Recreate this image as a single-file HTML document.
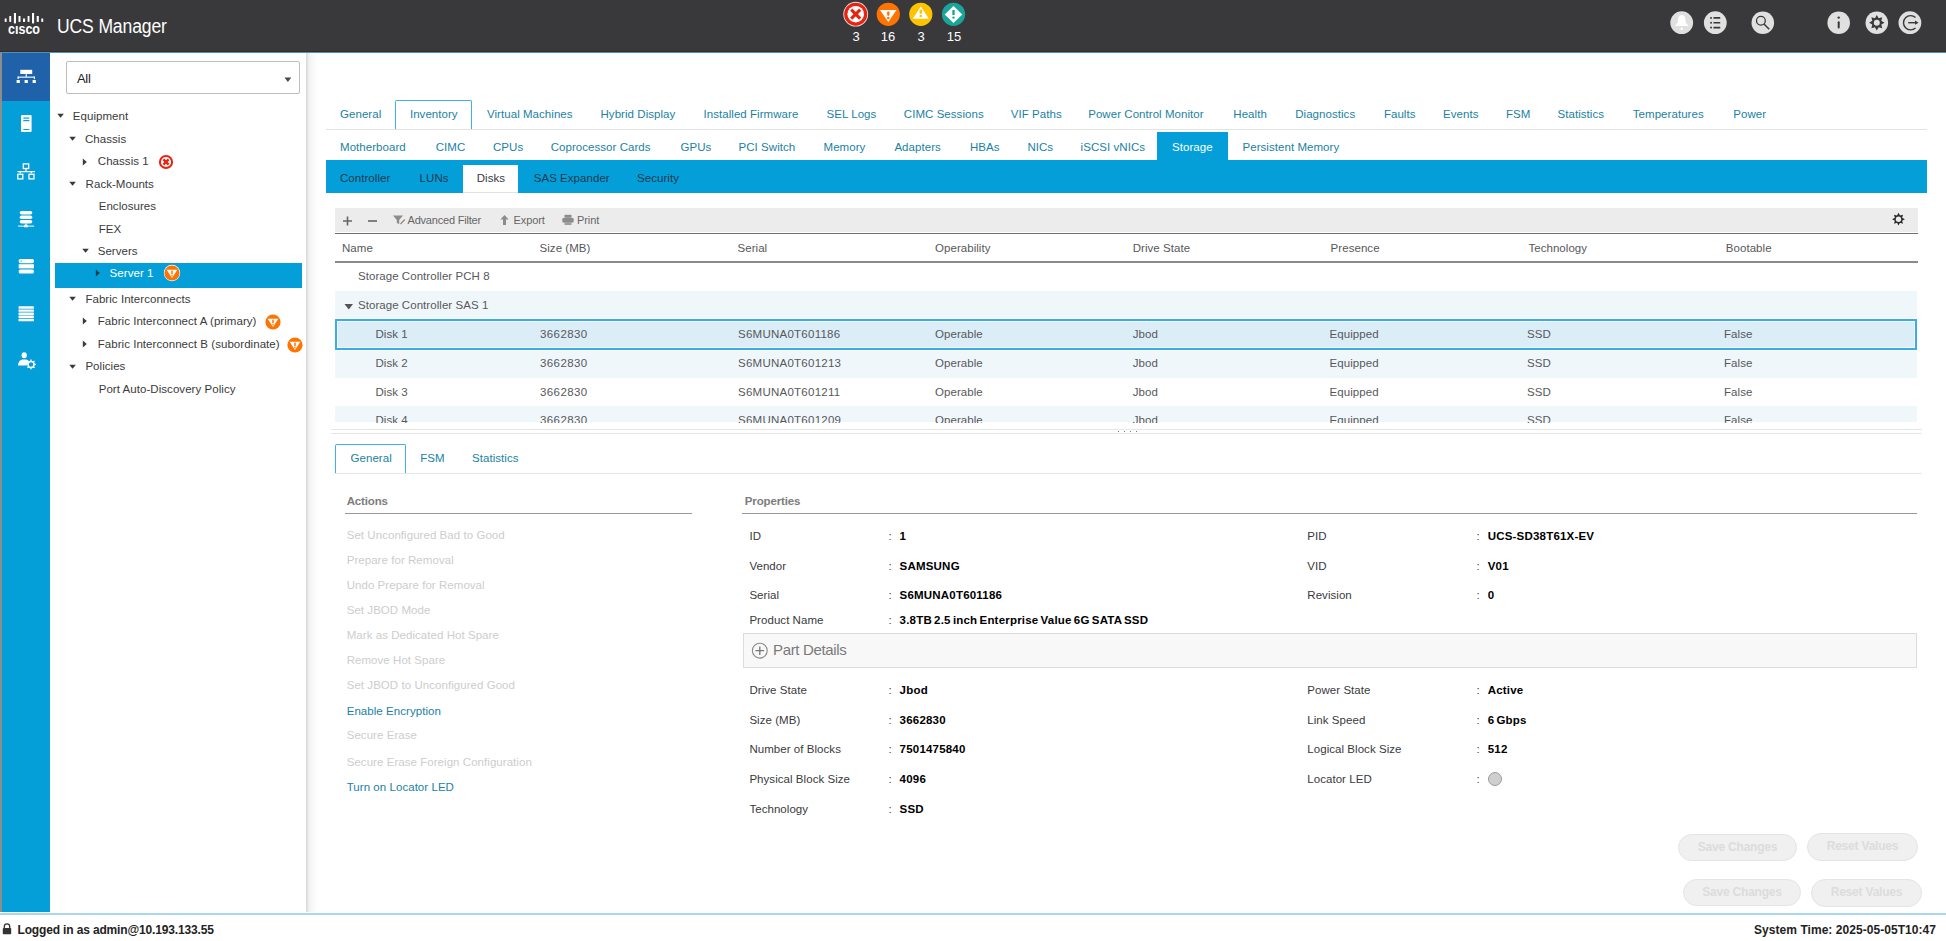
<!DOCTYPE html>
<html><head><meta charset="utf-8">
<style>
*{box-sizing:border-box;margin:0;padding:0}
html,body{width:1946px;height:941px;overflow:hidden;background:#fff;font-family:"Liberation Sans",sans-serif;}
.a{position:absolute}
.t{position:absolute;white-space:nowrap;line-height:16px;height:16px;font-size:11.5px;letter-spacing:0.05px}
#hdr{left:0;top:0;width:1946px;height:51px;background:#39393b}
.hl1{left:0;top:51px;width:1946px;height:1px;background:#352b2a}
.hl2{left:0;top:52px;width:1946px;height:1px;background:#4f93b5}
#side{left:2px;top:53px;width:48px;height:859px;background:#049fd9}
#sedge{left:0;top:53px;width:2px;height:859px;background:#8d8d8d}
#sact{left:2px;top:53px;width:48px;height:48px;background:#1f62a9}
.tree{color:#3a3a3c}
.tab1{color:#1a82a3}
.blk{color:#000;font-weight:bold}
</style></head>
<body>
<!-- HEADER -->
<div id="hdr" class="a"></div>
<div class="a hl1"></div><div class="a hl2"></div>
<svg class="a" style="left:0;top:0" width="50" height="40" viewBox="0 0 50 40">
 <g fill="#fff">
  <rect x="4.7" y="18.5" width="1.9" height="3.4"/>
  <rect x="9.3" y="16" width="1.9" height="5.9"/>
  <rect x="13.9" y="13" width="2.1" height="10.4"/>
  <rect x="18.5" y="16" width="2" height="5.9"/>
  <rect x="23" y="18.5" width="2.1" height="3.4"/>
  <rect x="27.6" y="16" width="1.9" height="5.9"/>
  <rect x="32" y="13" width="2.1" height="10.4"/>
  <rect x="36.7" y="16" width="2.1" height="5.9"/>
  <rect x="41.3" y="18.5" width="1.9" height="3.4"/>
 </g>
 <text x="8" y="33.9" fill="#fff" font-family="Liberation Sans" font-weight="bold" font-size="14.2" textLength="32" lengthAdjust="spacingAndGlyphs">cısco</text>
</svg>
<div class="t" style="left:57px;top:15px;font-size:19.5px;line-height:22px;height:22px;color:#fff;letter-spacing:-0.15px;transform:scaleX(0.9);transform-origin:0 0">UCS Manager</div>


<!-- alarms -->
<svg class="a" style="left:840px;top:0" width="130" height="48" viewBox="840 0 130 48">
 <circle cx="855.7" cy="14.2" r="12.4" fill="#fff" opacity="0.85"/>
 <circle cx="855.7" cy="14.2" r="11.5" fill="#e8230f"/>
 <circle cx="855.7" cy="14.2" r="8.3" fill="#fff"/>
 <path d="M851.2 9.7 L860.2 18.7 M860.2 9.7 L851.2 18.7" stroke="#e8230f" stroke-width="3.1" stroke-linecap="butt"/>
 <circle cx="888.3" cy="14.3" r="11.6" fill="#ff7300"/>
 <path d="M880 10.1 L896.5 10.1 L888.3 22 Z" fill="#fff"/>
 <rect x="887.2" y="11.6" width="2.3" height="4.1" rx="0.6" fill="#ff7300"/>
 <circle cx="888.3" cy="18" r="1.3" fill="#ff7300"/>
 <circle cx="920.8" cy="14.3" r="11.6" fill="#ffc300"/>
 <path d="M920.8 6.4 L928.9 18.8 L912.7 18.8 Z" fill="#fff"/>
 <rect x="919.6" y="9.6" width="2.4" height="4.2" rx="0.6" fill="#ffc300"/>
 <circle cx="920.8" cy="16" r="1.3" fill="#ffc300"/>
 <circle cx="953.5" cy="14.3" r="11.6" fill="#17a699"/>
 <path d="M953.5 6 L962.3 14.5 L953.5 23 L944.7 14.5 Z" fill="#fff"/>
 <rect x="952.3" y="10" width="2.4" height="5.1" rx="0.6" fill="#17a699"/>
 <circle cx="953.5" cy="17.6" r="1.2" fill="#17a699"/>
</svg>
<div class="t" style="left:841px;top:29px;width:30px;text-align:center;font-size:13px;color:#fff;letter-spacing:0">3</div>
<div class="t" style="left:873px;top:29px;width:30px;text-align:center;font-size:13px;color:#fff;letter-spacing:0">16</div>
<div class="t" style="left:906px;top:29px;width:30px;text-align:center;font-size:13px;color:#fff;letter-spacing:0">3</div>
<div class="t" style="left:939px;top:29px;width:30px;text-align:center;font-size:13px;color:#fff;letter-spacing:0">15</div>
<!-- right icons -->
<svg class="a" style="left:1660px;top:0" width="280" height="48" viewBox="1660 0 280 48">
 <g fill="#e0e0e0">
  <circle cx="1681.7" cy="22.7" r="11.4"/>
  <circle cx="1715.3" cy="22.7" r="11.4"/>
  <circle cx="1762.8" cy="22.7" r="11.3"/>
  <circle cx="1838.7" cy="22.7" r="11.3"/>
  <circle cx="1876.8" cy="22.7" r="11.3"/>
  <circle cx="1909.9" cy="22.7" r="11.4"/>
 </g>
 <path d="M1674.9 25.9 L1677.6 22.5 L1678.2 18.2 Q1678.8 15.1 1681.7 15.1 Q1684.6 15.1 1685.2 18.2 L1685.8 22.5 L1688.6 25.9 Z" fill="#fff"/>
 <circle cx="1681.7" cy="28.8" r="1.2" fill="#fff"/>
 <g fill="#39393b">
  <rect x="1710.2" y="17.1" width="1.7" height="1.7"/><rect x="1713.4" y="17.1" width="6.9" height="1.7" rx="0.5"/>
  <rect x="1710.2" y="21.9" width="1.7" height="1.7"/><rect x="1713.4" y="21.9" width="6.9" height="1.7" rx="0.5"/>
  <rect x="1710.2" y="26.7" width="1.7" height="1.7"/><rect x="1713.4" y="26.7" width="6.9" height="1.7" rx="0.5"/>
 </g>
 <circle cx="1760.9" cy="20.8" r="4.4" fill="none" stroke="#39393b" stroke-width="1.3"/>
 <path d="M1764 24 L1769.2 29.2" stroke="#39393b" stroke-width="1.5"/>
 <circle cx="1838.7" cy="17.6" r="1.2" fill="#39393b"/>
 <rect x="1837.7" y="21.3" width="2" height="7.3" rx="1" fill="#39393b"/>
 <path d="M1876.80 15.00 L1878.68 18.17 L1882.24 17.26 L1881.33 20.82 L1884.50 22.70 L1881.33 24.58 L1882.24 28.14 L1878.68 27.23 L1876.80 30.40 L1874.92 27.23 L1871.36 28.14 L1872.27 24.58 L1869.10 22.70 L1872.27 20.82 L1871.36 17.26 L1874.92 18.17 Z" fill="#39393b"/>
 <circle cx="1876.8" cy="22.7" r="3" fill="#e0e0e0"/>
 <path d="M1915.5 17.6 A7.1 7.1 0 1 0 1915.5 27.9" fill="none" stroke="#39393b" stroke-width="1.4"/>
 <path d="M1908.2 22.7 L1915.8 22.7" stroke="#39393b" stroke-width="1.4"/>
 <path d="M1915 20.6 L1918.6 22.7 L1915 24.8 Z" fill="#39393b"/>
</svg>

<!-- SIDEBAR -->
<div id="sedge" class="a"></div>
<div id="side" class="a"></div>
<div id="sact" class="a"></div>

<svg class="a" style="left:0;top:53px" width="50" height="330" viewBox="0 53 50 330">
 <!-- icon0 hierarchy (active) -->
 <g fill="#fff">
  <rect x="20.3" y="69.8" width="11.9" height="4.2"/>
  <rect x="25.7" y="74" width="1.1" height="3"/>
  <rect x="17.6" y="76.6" width="17.3" height="1.1"/>
  <rect x="17.6" y="76.6" width="1.1" height="2.5"/><rect x="33.8" y="76.6" width="1.1" height="2.5"/>
  <rect x="16.6" y="80" width="3.2" height="3"/><rect x="24.6" y="80" width="3.2" height="3"/><rect x="32.6" y="80" width="3.2" height="3"/>
 </g>
 <!-- icon1 server -->
 <rect x="21" y="115" width="10.6" height="17" rx="1" fill="#fff"/>
 <rect x="23.3" y="117.5" width="6" height="1.2" fill="#049fd9"/>
 <rect x="23.3" y="120" width="6" height="1.2" fill="#049fd9"/>
 <rect x="23.3" y="129" width="6" height="1" fill="#049fd9"/>
 <!-- icon2 network -->
 <g fill="none" stroke="#fff" stroke-width="1.3">
  <rect x="23.3" y="163.9" width="5.4" height="4.6"/>
  <path d="M26 168.5 V171 M17.5 171.6 H35 M20.3 171.6 V173.5 M31.3 171.6 V173.5"/>
  <rect x="17.8" y="174.3" width="5" height="4.6"/>
  <rect x="29" y="174.3" width="5" height="4.6"/>
 </g>
 <!-- icon3 db server -->
 <g fill="#fff">
  <rect x="19.7" y="211" width="12.6" height="3.6" rx="1.8"/>
  <rect x="19.7" y="215.5" width="12.6" height="3.6" rx="1.8"/>
  <rect x="19.7" y="220" width="12.6" height="3.6" rx="1.8"/>
  <rect x="25.4" y="223.5" width="1.2" height="2.5"/>
  <rect x="18" y="225.6" width="16.2" height="1"/>
  <rect x="24.2" y="224.8" width="3.6" height="2.5"/>
 </g>
 <!-- icon4 storage -->
 <g fill="#fff">
  <rect x="18.7" y="259" width="15.2" height="4.2" rx="1.6"/>
  <rect x="18.7" y="264.2" width="15.2" height="4.2"/>
  <rect x="18.7" y="269.4" width="15.2" height="4.2" rx="1.6"/>
 </g>
 <rect x="20.5" y="260.5" width="1.2" height="1" fill="#049fd9"/>
 <!-- icon5 rack list -->
 <g fill="#fff">
  <rect x="18.5" y="306.3" width="15.4" height="2.4" rx="0.4"/>
  <rect x="18.5" y="309.4" width="15.4" height="2.4" rx="0.4"/>
  <rect x="18.5" y="312.5" width="15.4" height="2.4" rx="0.4"/>
  <rect x="18.5" y="315.6" width="15.4" height="2.4" rx="0.4"/>
  <rect x="18.5" y="318.7" width="15.4" height="2.6" rx="0.4"/>
 </g>
 <!-- icon6 user gear -->
 <g fill="#fff">
  <ellipse cx="24.2" cy="355.2" rx="2.6" ry="3"/>
  <path d="M18 365.6 Q18.3 360.6 22.2 359.6 L26.2 359.6 Q28.2 360.3 28.8 361.5 L26.5 365.6 Z"/>
 </g>
 <g transform="translate(31 364.4)">
  <circle r="3" fill="none" stroke="#fff" stroke-width="1.5"/>
  <g stroke="#fff" stroke-width="1.3">
   <path d="M0 -4.9 V-3.3 M0 3.3 V4.9 M-4.9 0 H-3.3 M3.3 0 H4.9 M-3.5 -3.5 L-2.3 -2.3 M2.3 2.3 L3.5 3.5 M3.5 -3.5 L2.3 -2.3 M-2.3 2.3 L-3.5 3.5"/>
  </g>
 </g>
</svg>

<!-- TREE PANEL -->
<div class="a" style="left:50px;top:53px;width:256px;height:859px;background:#fff"></div>
<div class="a" style="left:306px;top:53px;width:12px;height:859px;background:linear-gradient(to right,#d9d9d9,#f4f4f4 30%,#fff)"></div>
<div class="a" style="left:66px;top:61px;width:234px;height:33px;border:1px solid #bdbdbd;border-radius:2px;background:#fff"></div>
<div class="t" style="left:77px;top:71px;font-size:13px;color:#222;letter-spacing:-0.3px">All</div>
<svg class="a" style="left:283px;top:76px" width="10" height="7"><path d="M1.5 1.5 L8.3 1.5 L4.9 6 Z" fill="#4a4a4a"/></svg>
<svg class="a" style="left:57px;top:113px" width="8" height="6"><path d="M0.3 0.8 L6.8 0.8 L3.55 4.8 Z" fill="#3a3a3c"/></svg>
<div class="t tree" style="left:72.8px;top:108.0px">Equipment</div>
<svg class="a" style="left:69px;top:136px" width="8" height="6"><path d="M0.3 0.8 L6.8 0.8 L3.55 4.8 Z" fill="#3a3a3c"/></svg>
<div class="t tree" style="left:85.0px;top:130.8px">Chassis</div>
<svg class="a" style="left:82px;top:158px" width="6" height="8"><path d="M0.8 0.5 L4.8 4 L0.8 7.5 Z" fill="#3a3a3c"/></svg>
<div class="t tree" style="left:97.8px;top:153.1px">Chassis 1</div>
<svg class="a" style="left:69px;top:181px" width="8" height="6"><path d="M0.3 0.8 L6.8 0.8 L3.55 4.8 Z" fill="#3a3a3c"/></svg>
<div class="t tree" style="left:85.6px;top:176.0px">Rack-Mounts</div>
<div class="t tree" style="left:98.7px;top:198.3px">Enclosures</div>
<div class="t tree" style="left:98.7px;top:220.7px">FEX</div>
<svg class="a" style="left:82px;top:248px" width="8" height="6"><path d="M0.3 0.8 L6.8 0.8 L3.55 4.8 Z" fill="#3a3a3c"/></svg>
<div class="t tree" style="left:97.7px;top:242.9px">Servers</div>
<svg class="a" style="left:69px;top:296px" width="8" height="6"><path d="M0.3 0.8 L6.8 0.8 L3.55 4.8 Z" fill="#3a3a3c"/></svg>
<div class="t tree" style="left:85.4px;top:290.5px">Fabric Interconnects</div>
<svg class="a" style="left:82px;top:317px" width="6" height="8"><path d="M0.8 0.5 L4.8 4 L0.8 7.5 Z" fill="#3a3a3c"/></svg>
<div class="t tree" style="left:97.7px;top:312.5px">Fabric Interconnect A (primary)</div>
<svg class="a" style="left:82px;top:340px" width="6" height="8"><path d="M0.8 0.5 L4.8 4 L0.8 7.5 Z" fill="#3a3a3c"/></svg>
<div class="t tree" style="left:97.7px;top:335.5px">Fabric Interconnect B (subordinate)</div>
<svg class="a" style="left:69px;top:364px" width="8" height="6"><path d="M0.3 0.8 L6.8 0.8 L3.55 4.8 Z" fill="#3a3a3c"/></svg>
<div class="t tree" style="left:85.4px;top:358.4px">Policies</div>
<div class="t tree" style="left:98.7px;top:381.1px">Port Auto-Discovery Policy</div>
<div class="a" style="left:55px;top:263px;width:247px;height:25px;background:#049fd9"></div>
<svg class="a" style="left:94.6px;top:269px" width="6" height="8"><path d="M0.8 0.5 L4.8 4 L0.8 7.5 Z" fill="#2a3a48"/></svg>
<div class="t" style="left:109.6px;top:265.2px;color:#fff">Server 1</div>
<svg class="a" style="left:162.6px;top:264.1px" width="18" height="18" viewBox="0 0 18 18"><circle cx="9" cy="9" r="8.2" fill="#fff"/><circle cx="9" cy="9" r="7.6" fill="#ff7300"/><path d="M3.6 5.8 L14.4 5.8 L9 14 Z" fill="#fff"/><rect x="8.25" y="6.6" width="1.5" height="3.6" fill="#ff7300"/><circle cx="9" cy="11.7" r="0.8" fill="#ff7300"/></svg>
<svg class="a" style="left:263.7px;top:312.7px" width="18" height="18" viewBox="0 0 18 18"><circle cx="9" cy="9" r="7.6" fill="#ff7300"/><path d="M3.6 5.8 L14.4 5.8 L9 14 Z" fill="#fff"/><rect x="8.25" y="6.6" width="1.5" height="3.6" fill="#ff7300"/><circle cx="9" cy="11.7" r="0.8" fill="#ff7300"/></svg>
<svg class="a" style="left:286.0px;top:335.5px" width="18" height="18" viewBox="0 0 18 18"><circle cx="9" cy="9" r="7.6" fill="#ff7300"/><path d="M3.6 5.8 L14.4 5.8 L9 14 Z" fill="#fff"/><rect x="8.25" y="6.6" width="1.5" height="3.6" fill="#ff7300"/><circle cx="9" cy="11.7" r="0.8" fill="#ff7300"/></svg>
<svg class="a" style="left:156.6px;top:152.7px" width="18" height="18" viewBox="0 0 18 18"><circle cx="9" cy="9" r="6.1" fill="none" stroke="#e8230f" stroke-width="2"/><path d="M6.4 6.4 L11.6 11.6 M11.6 6.4 L6.4 11.6" stroke="#e8230f" stroke-width="2.4"/></svg>


<!-- MAIN TABS -->
<div class="a" style="left:395px;top:100px;width:77px;height:29px;border:1.5px solid #3fb0e3;border-bottom:none;border-radius:2px 2px 0 0;background:#fff"></div>
<div class="a" style="left:326px;top:129px;width:1601px;height:1.2px;background:#e3e3e3"></div>
<div class="t tab1" style="left:340.0px;top:105.5px">General</div>
<div class="t tab1" style="left:409.9px;top:105.5px">Inventory</div>
<div class="t tab1" style="left:487.0px;top:105.5px">Virtual Machines</div>
<div class="t tab1" style="left:600.5px;top:105.5px">Hybrid Display</div>
<div class="t tab1" style="left:703.5px;top:105.5px">Installed Firmware</div>
<div class="t tab1" style="left:826.5px;top:105.5px">SEL Logs</div>
<div class="t tab1" style="left:903.8px;top:105.5px">CIMC Sessions</div>
<div class="t tab1" style="left:1010.8px;top:105.5px">VIF Paths</div>
<div class="t tab1" style="left:1088.2px;top:105.5px">Power Control Monitor</div>
<div class="t tab1" style="left:1233.3px;top:105.5px">Health</div>
<div class="t tab1" style="left:1295.2px;top:105.5px">Diagnostics</div>
<div class="t tab1" style="left:1383.9px;top:105.5px">Faults</div>
<div class="t tab1" style="left:1443.0px;top:105.5px">Events</div>
<div class="t tab1" style="left:1505.9px;top:105.5px">FSM</div>
<div class="t tab1" style="left:1557.5px;top:105.5px">Statistics</div>
<div class="t tab1" style="left:1632.8px;top:105.5px">Temperatures</div>
<div class="t tab1" style="left:1733.3px;top:105.5px">Power</div>
<div class="a" style="left:1157px;top:132px;width:71px;height:29px;background:#049fd9"></div>
<div class="t" style="left:340.0px;top:138.5px;color:#1a82a3">Motherboard</div>
<div class="t" style="left:435.7px;top:138.5px;color:#1a82a3">CIMC</div>
<div class="t" style="left:493.0px;top:138.5px;color:#1a82a3">CPUs</div>
<div class="t" style="left:550.7px;top:138.5px;color:#1a82a3">Coprocessor Cards</div>
<div class="t" style="left:680.5px;top:138.5px;color:#1a82a3">GPUs</div>
<div class="t" style="left:738.5px;top:138.5px;color:#1a82a3">PCI Switch</div>
<div class="t" style="left:823.5px;top:138.5px;color:#1a82a3">Memory</div>
<div class="t" style="left:894.4px;top:138.5px;color:#1a82a3">Adapters</div>
<div class="t" style="left:970.0px;top:138.5px;color:#1a82a3">HBAs</div>
<div class="t" style="left:1027.4px;top:138.5px;color:#1a82a3">NICs</div>
<div class="t" style="left:1080.6px;top:138.5px;color:#1a82a3">iSCSI vNICs</div>
<div class="t" style="left:1172.0px;top:138.5px;color:#fff">Storage</div>
<div class="t" style="left:1242.5px;top:138.5px;color:#1a82a3">Persistent Memory</div>
<div class="a" style="left:326px;top:160px;width:1601px;height:33px;background:#049fd9"></div>
<div class="a" style="left:463px;top:165px;width:55px;height:28px;background:#fff"></div><div class="a" style="left:463px;top:192.3px;width:55px;height:1px;background:#e2e2e2"></div>
<div class="t" style="left:340.0px;top:169.5px;color:#1b3a50">Controller</div>
<div class="t" style="left:419.6px;top:169.5px;color:#1b3a50">LUNs</div>
<div class="t" style="left:476.7px;top:169.5px;color:#3a3a3c">Disks</div>
<div class="t" style="left:533.7px;top:169.5px;color:#1b3a50">SAS Expander</div>
<div class="t" style="left:637.0px;top:169.5px;color:#1b3a50">Security</div>
<div class="a" style="left:335px;top:207.6px;width:1583px;height:24.4px;background:#ececec"></div><div class="a" style="left:335px;top:233px;width:1583px;height:1px;background:#707070"></div>
<svg class="a" style="left:340px;top:212px" width="270" height="16" viewBox="340 212 270 16">
 <path d="M343 221 H352 M347.5 216.5 V225.5" stroke="#666" stroke-width="1.6"/>
 <path d="M368 221 H377" stroke="#666" stroke-width="1.6"/>
 <path d="M393 215.5 H403 L399.2 220 V224 L396.8 223 V220 Z" fill="#8c8c8c"/>
 <path d="M400.5 224 L404.8 219.5" stroke="#8c8c8c" stroke-width="1.3"/>
 <path d="M504.5 215 L508.6 219.6 H506 V225 H503 V219.6 H500.4 Z" fill="#8c8c8c"/>
 <rect x="564.5" y="214.8" width="7" height="3" fill="#8c8c8c"/>
 <rect x="562.3" y="218" width="11.4" height="4.6" rx="1" fill="#8c8c8c"/>
 <rect x="564.5" y="222" width="7" height="3" fill="#a0a0a0"/>
</svg>
<div class="t" style="left:407.5px;top:212px;font-size:11px;color:#666;letter-spacing:-0.2px">Advanced Filter</div>
<div class="t" style="left:513.5px;top:212px;font-size:11px;color:#666;letter-spacing:-0.1px">Export</div>
<div class="t" style="left:577px;top:212px;font-size:11px;color:#666;letter-spacing:-0.1px">Print</div>
<svg class="a" style="left:1888px;top:209px" width="22" height="22" viewBox="1888 209 22 22"><path d="M1898.50 212.80 L1899.99 215.60 L1903.03 214.67 L1902.10 217.71 L1904.90 219.20 L1902.10 220.69 L1903.03 223.73 L1899.99 222.80 L1898.50 225.60 L1897.01 222.80 L1893.97 223.73 L1894.90 220.69 L1892.10 219.20 L1894.90 217.71 L1893.97 214.67 L1897.01 215.60 Z" fill="#2a2a2c"/><circle cx="1898.5" cy="219.2" r="2.7" fill="#ececec"/></svg>
<div class="a" style="left:335px;top:261px;width:1583px;height:2px;background:#8a8a8a"></div>
<div class="t" style="left:342px;top:239.5px;color:#58585b">Name</div>
<div class="t" style="left:539.5px;top:239.5px;color:#58585b">Size (MB)</div>
<div class="t" style="left:737.5px;top:239.5px;color:#58585b">Serial</div>
<div class="t" style="left:935px;top:239.5px;color:#58585b">Operability</div>
<div class="t" style="left:1132.7px;top:239.5px;color:#58585b">Drive State</div>
<div class="t" style="left:1330.6px;top:239.5px;color:#58585b">Presence</div>
<div class="t" style="left:1528.4px;top:239.5px;color:#58585b">Technology</div>
<div class="t" style="left:1725.8px;top:239.5px;color:#58585b">Bootable</div>
<div class="a" style="left:335px;top:291px;width:1582px;height:26.5px;background:#f0f7fb"></div>
<div class="a" style="left:335px;top:319.3px;width:1582px;height:30.4px;background:#dbedf7;border:2px solid #3aaee2;box-shadow:inset 0 0 0 1px rgba(255,255,255,0.75)"></div>
<div class="a" style="left:335px;top:351.4px;width:1582px;height:26.3px;background:#f0f7fb"></div>
<div class="a" style="left:335px;top:406.2px;width:1582px;height:16.2px;background:#f0f7fb"></div>
<div class="t" style="left:358px;top:267.5px;color:#58585b">Storage Controller PCH 8</div>
<svg class="a" style="left:344px;top:302.5px" width="10" height="8"><path d="M0.5 1 L9 1 L4.75 6.5 Z" fill="#555"/></svg>
<div class="t" style="left:358px;top:296.5px;color:#58585b">Storage Controller SAS 1</div>
<div class="a" style="left:335px;top:262px;width:1583px;height:161px;overflow:hidden">
<div class="t" style="left:40.5px;top:64.0px;color:#58585b">Disk 1</div>
<div class="t" style="left:205.0px;top:64.0px;color:#58585b;letter-spacing:0.4px">3662830</div>
<div class="t" style="left:403.0px;top:64.0px;color:#58585b;letter-spacing:0.25px">S6MUNA0T601186</div>
<div class="t" style="left:600.0px;top:64.0px;color:#58585b">Operable</div>
<div class="t" style="left:797.7px;top:64.0px;color:#58585b">Jbod</div>
<div class="t" style="left:994.6px;top:64.0px;color:#58585b">Equipped</div>
<div class="t" style="left:1192.0px;top:64.0px;color:#58585b">SSD</div>
<div class="t" style="left:1389.0px;top:64.0px;color:#58585b">False</div>
<div class="t" style="left:40.5px;top:93.0px;color:#58585b">Disk 2</div>
<div class="t" style="left:205.0px;top:93.0px;color:#58585b;letter-spacing:0.4px">3662830</div>
<div class="t" style="left:403.0px;top:93.0px;color:#58585b;letter-spacing:0.25px">S6MUNA0T601213</div>
<div class="t" style="left:600.0px;top:93.0px;color:#58585b">Operable</div>
<div class="t" style="left:797.7px;top:93.0px;color:#58585b">Jbod</div>
<div class="t" style="left:994.6px;top:93.0px;color:#58585b">Equipped</div>
<div class="t" style="left:1192.0px;top:93.0px;color:#58585b">SSD</div>
<div class="t" style="left:1389.0px;top:93.0px;color:#58585b">False</div>
<div class="t" style="left:40.5px;top:121.5px;color:#58585b">Disk 3</div>
<div class="t" style="left:205.0px;top:121.5px;color:#58585b;letter-spacing:0.4px">3662830</div>
<div class="t" style="left:403.0px;top:121.5px;color:#58585b;letter-spacing:0.25px">S6MUNA0T601211</div>
<div class="t" style="left:600.0px;top:121.5px;color:#58585b">Operable</div>
<div class="t" style="left:797.7px;top:121.5px;color:#58585b">Jbod</div>
<div class="t" style="left:994.6px;top:121.5px;color:#58585b">Equipped</div>
<div class="t" style="left:1192.0px;top:121.5px;color:#58585b">SSD</div>
<div class="t" style="left:1389.0px;top:121.5px;color:#58585b">False</div>
<div class="t" style="left:40.5px;top:149.5px;color:#58585b">Disk 4</div>
<div class="t" style="left:205.0px;top:149.5px;color:#58585b;letter-spacing:0.4px">3662830</div>
<div class="t" style="left:403.0px;top:149.5px;color:#58585b;letter-spacing:0.25px">S6MUNA0T601209</div>
<div class="t" style="left:600.0px;top:149.5px;color:#58585b">Operable</div>
<div class="t" style="left:797.7px;top:149.5px;color:#58585b">Jbod</div>
<div class="t" style="left:994.6px;top:149.5px;color:#58585b">Equipped</div>
<div class="t" style="left:1192.0px;top:149.5px;color:#58585b">SSD</div>
<div class="t" style="left:1389.0px;top:149.5px;color:#58585b">False</div>
</div>
<div class="a" style="left:331px;top:428.5px;width:1591px;height:1px;background:#e6e6e6"></div>
<div class="a" style="left:331px;top:433px;width:1591px;height:1px;background:#e6e6e6"></div>
<div class="a" style="left:1117.5px;top:430.5px;width:1.5px;height:1.5px;background:#777"></div>
<div class="a" style="left:1123.5px;top:430.5px;width:1.5px;height:1.5px;background:#777"></div>
<div class="a" style="left:1129.5px;top:430.5px;width:1.5px;height:1.5px;background:#777"></div>
<div class="a" style="left:1135.5px;top:430.5px;width:1.5px;height:1.5px;background:#777"></div>


<!-- LOWER TABS -->
<div class="a" style="left:335px;top:444px;width:71px;height:28.5px;border:1.5px solid #3fb0e3;border-bottom:none;border-radius:2px 2px 0 0;background:#fff"></div>
<div class="a" style="left:335px;top:472.5px;width:1587px;height:1.2px;background:#e6e6e6"></div>
<div class="t tab1" style="left:350.5px;top:450px">General</div>
<div class="t tab1" style="left:420.2px;top:450px">FSM</div>
<div class="t tab1" style="left:472px;top:450px">Statistics</div>
<div class="t" style="left:346.7px;top:492.5px;color:#7d7d7d;font-weight:bold;letter-spacing:-0.15px">Actions</div>
<div class="a" style="left:345px;top:512.5px;width:347px;height:1px;background:#9a9a9a"></div>
<div class="t" style="left:744.8px;top:492.5px;color:#7d7d7d;font-weight:bold;letter-spacing:-0.15px">Properties</div>
<div class="a" style="left:742px;top:512.5px;width:1175px;height:1px;background:#9a9a9a"></div>
<div class="t" style="left:346.7px;top:526.7px;color:#cdcdcd">Set Unconfigured Bad to Good</div>
<div class="t" style="left:346.7px;top:552.0px;color:#cdcdcd">Prepare for Removal</div>
<div class="t" style="left:346.7px;top:577.0px;color:#cdcdcd">Undo Prepare for Removal</div>
<div class="t" style="left:346.7px;top:602.2px;color:#cdcdcd">Set JBOD Mode</div>
<div class="t" style="left:346.7px;top:627.2px;color:#cdcdcd">Mark as Dedicated Hot Spare</div>
<div class="t" style="left:346.7px;top:652.3px;color:#cdcdcd">Remove Hot Spare</div>
<div class="t" style="left:346.7px;top:677.4px;color:#cdcdcd">Set JBOD to Unconfigured Good</div>
<div class="t" style="left:346.7px;top:702.6px;color:#1a82a3">Enable Encryption</div>
<div class="t" style="left:346.7px;top:727.4px;color:#cdcdcd">Secure Erase</div>
<div class="t" style="left:346.7px;top:753.6px;color:#cdcdcd">Secure Erase Foreign Configuration</div>
<div class="t" style="left:346.7px;top:778.7px;color:#1a82a3">Turn on Locator LED</div>
<div class="t" style="left:749.4px;top:528.4px;color:#3a3a3c">ID</div>
<div class="t" style="left:888.5px;top:528.4px;color:#3a3a3c">:</div>
<div class="t blk" style="left:899.6px;letter-spacing:0.2px;word-spacing:-1.2px;top:528.4px">1</div>
<div class="t" style="left:749.4px;top:558.1px;color:#3a3a3c">Vendor</div>
<div class="t" style="left:888.5px;top:558.1px;color:#3a3a3c">:</div>
<div class="t blk" style="left:899.6px;letter-spacing:0.2px;word-spacing:-1.2px;top:558.1px">SAMSUNG</div>
<div class="t" style="left:749.4px;top:587.0px;color:#3a3a3c">Serial</div>
<div class="t" style="left:888.5px;top:587.0px;color:#3a3a3c">:</div>
<div class="t blk" style="left:899.6px;letter-spacing:0.2px;word-spacing:-1.2px;top:587.0px">S6MUNA0T601186</div>
<div class="t" style="left:749.4px;top:612.3px;color:#3a3a3c">Product Name</div>
<div class="t" style="left:888.5px;top:612.3px;color:#3a3a3c">:</div>
<div class="t blk" style="left:899.6px;letter-spacing:0.2px;word-spacing:-1.2px;top:612.3px">3.8TB 2.5 inch Enterprise Value 6G SATA SSD</div>
<div class="t" style="left:749.4px;top:682.0px;color:#3a3a3c">Drive State</div>
<div class="t" style="left:888.5px;top:682.0px;color:#3a3a3c">:</div>
<div class="t blk" style="left:899.6px;letter-spacing:0.2px;word-spacing:-1.2px;top:682.0px">Jbod</div>
<div class="t" style="left:749.4px;top:711.7px;color:#3a3a3c">Size (MB)</div>
<div class="t" style="left:888.5px;top:711.7px;color:#3a3a3c">:</div>
<div class="t blk" style="left:899.6px;letter-spacing:0.2px;word-spacing:-1.2px;top:711.7px">3662830</div>
<div class="t" style="left:749.4px;top:741.4px;color:#3a3a3c">Number of Blocks</div>
<div class="t" style="left:888.5px;top:741.4px;color:#3a3a3c">:</div>
<div class="t blk" style="left:899.6px;letter-spacing:0.2px;word-spacing:-1.2px;top:741.4px">7501475840</div>
<div class="t" style="left:749.4px;top:771.0px;color:#3a3a3c">Physical Block Size</div>
<div class="t" style="left:888.5px;top:771.0px;color:#3a3a3c">:</div>
<div class="t blk" style="left:899.6px;letter-spacing:0.2px;word-spacing:-1.2px;top:771.0px">4096</div>
<div class="t" style="left:749.4px;top:800.8px;color:#3a3a3c">Technology</div>
<div class="t" style="left:888.5px;top:800.8px;color:#3a3a3c">:</div>
<div class="t blk" style="left:899.6px;letter-spacing:0.2px;word-spacing:-1.2px;top:800.8px">SSD</div>
<div class="t" style="left:1307.3px;top:528.4px;color:#3a3a3c">PID</div>
<div class="t" style="left:1476.5px;top:528.4px;color:#3a3a3c">:</div>
<div class="t blk" style="left:1487.7px;letter-spacing:0.2px;word-spacing:-1.2px;top:528.4px">UCS-SD38T61X-EV</div>
<div class="t" style="left:1307.3px;top:558.1px;color:#3a3a3c">VID</div>
<div class="t" style="left:1476.5px;top:558.1px;color:#3a3a3c">:</div>
<div class="t blk" style="left:1487.7px;letter-spacing:0.2px;word-spacing:-1.2px;top:558.1px">V01</div>
<div class="t" style="left:1307.3px;top:587.0px;color:#3a3a3c">Revision</div>
<div class="t" style="left:1476.5px;top:587.0px;color:#3a3a3c">:</div>
<div class="t blk" style="left:1487.7px;letter-spacing:0.2px;word-spacing:-1.2px;top:587.0px">0</div>
<div class="t" style="left:1307.3px;top:682.0px;color:#3a3a3c">Power State</div>
<div class="t" style="left:1476.5px;top:682.0px;color:#3a3a3c">:</div>
<div class="t blk" style="left:1487.7px;letter-spacing:0.2px;word-spacing:-1.2px;top:682.0px">Active</div>
<div class="t" style="left:1307.3px;top:711.7px;color:#3a3a3c">Link Speed</div>
<div class="t" style="left:1476.5px;top:711.7px;color:#3a3a3c">:</div>
<div class="t blk" style="left:1487.7px;letter-spacing:0.2px;word-spacing:-1.2px;top:711.7px">6 Gbps</div>
<div class="t" style="left:1307.3px;top:741.4px;color:#3a3a3c">Logical Block Size</div>
<div class="t" style="left:1476.5px;top:741.4px;color:#3a3a3c">:</div>
<div class="t blk" style="left:1487.7px;letter-spacing:0.2px;word-spacing:-1.2px;top:741.4px">512</div>
<div class="t" style="left:1307.3px;top:771.0px;color:#3a3a3c">Locator LED</div>
<div class="t" style="left:1476.5px;top:771.0px;color:#3a3a3c">:</div>
<div class="a" style="left:1488px;top:771.5px;width:14px;height:14px;border-radius:50%;background:#cfcfcf;border:1px solid #9c9c9c"></div>
<div class="a" style="left:742.5px;top:633px;width:1174.5px;height:35px;background:#f8f8f8;border:1px solid #dcdcdc"></div>
<svg class="a" style="left:750px;top:641px" width="20" height="20" viewBox="0 0 20 20"><circle cx="9.8" cy="9.7" r="7.4" fill="none" stroke="#8a8a8a" stroke-width="1.1"/><path d="M9.8 5.4 V14 M5.5 9.7 H14.1" stroke="#777" stroke-width="1.3"/></svg>
<div class="t" style="left:773px;top:641px;font-size:15px;line-height:18px;height:18px;color:#7a7a7a;letter-spacing:-0.35px">Part Details</div>
<div class="a" style="left:1678px;top:834px;width:119px;height:27px;border-radius:14px;background:#f0f0f0;border:1px solid #e4e4e4;color:#dcdcdc;font-weight:bold;font-size:12px;text-align:center;line-height:25px;letter-spacing:-0.2px">Save Changes</div>
<div class="a" style="left:1807px;top:833px;width:111px;height:28px;border-radius:14px;background:#f0f0f0;border:1px solid #e4e4e4;color:#dcdcdc;font-weight:bold;font-size:12px;text-align:center;line-height:24px;letter-spacing:-0.2px">Reset Values</div>
<div class="a" style="left:1683px;top:879px;width:118px;height:27px;border-radius:14px;background:#f0f0f0;border:1px solid #e4e4e4;color:#dcdcdc;font-weight:bold;font-size:12px;text-align:center;line-height:25px;letter-spacing:-0.2px">Save Changes</div>
<div class="a" style="left:1811px;top:879px;width:111px;height:28px;border-radius:14px;background:#f0f0f0;border:1px solid #e4e4e4;color:#dcdcdc;font-weight:bold;font-size:12px;text-align:center;line-height:24px;letter-spacing:-0.2px">Reset Values</div>
<div class="a" style="left:0;top:913.4px;width:1946px;height:1.3px;background:#a8d8ee"></div>
<svg class="a" style="left:2px;top:923px" width="10" height="12" viewBox="0 0 10 12"><path d="M2.3 5 V3.5 A2.7 2.7 0 0 1 7.7 3.5 V5" fill="none" stroke="#333" stroke-width="1.3"/><rect x="0.8" y="5" width="8.4" height="6.3" rx="0.8" fill="#333"/></svg>
<div class="t" style="left:17.5px;top:921.5px;color:#222;font-weight:bold;font-size:12px;letter-spacing:-0.15px">Logged in as admin@10.193.133.55</div>
<div class="t" style="left:1754px;top:921.5px;color:#222;font-weight:bold;font-size:12px;letter-spacing:0.05px">System Time: 2025-05-05T10:47</div>

</body></html>
